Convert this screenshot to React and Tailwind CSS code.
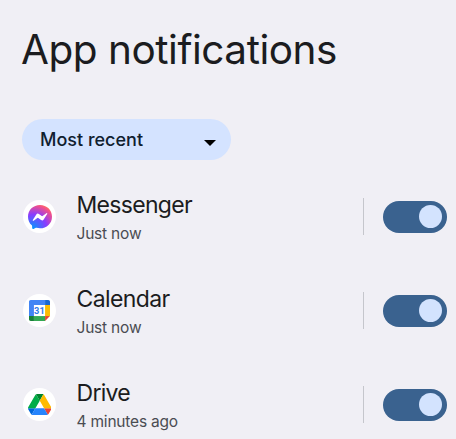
function MessengerIcon() {
  return (
    <svg viewBox="0 0 24 24" className="size-[24px]">
      <defs>
        <radialGradient id="messenger" cx="0.19" cy="0.99" r="1.09">
          <stop offset="0" stopColor="#0099ff" />
          <stop offset="0.55" stopColor="#8a3cff" />
          <stop offset="0.9" stopColor="#f0508c" />
          <stop offset="1" stopColor="#ff7061" />
        </radialGradient>
      </defs>
      <path
        fill="url(#messenger)"
        d="M12 0C5.24 0 0 4.95 0 11.64c0 3.5 1.43 6.52 3.77 8.61.2.17.31.42.32.69l.07 2.13c.02.68.72 1.12 1.34.85l2.38-1.05a1 1 0 0 1 .64-.05c1.1.3 2.26.46 3.48.46 6.76 0 12-4.95 12-11.64S18.76 0 12 0Z"
      />
      <path
        fill="#fff"
        d="m4.79 15.04 3.53-5.59a1.8 1.8 0 0 1 2.6-.48l2.8 2.1c.26.2.61.2.87 0l3.79-2.87c.5-.38 1.16.22.82.76l-3.52 5.59a1.8 1.8 0 0 1-2.6.48l-2.81-2.1a.72.72 0 0 0-.87 0L5.61 15.8c-.5.38-1.16-.22-.82-.76Z"
      />
    </svg>
  );
}

function CalendarIcon() {
  return (
    <svg viewBox="0 0 200 200" className="size-[21px]">
      <path fill="#fff" d="M47 47h106v106H47z" />
      <path fill="#ea4335" d="M153 200l47-47h-47z" />
      <path fill="#fbbc04" d="M200 47h-47v106h47z" />
      <path fill="#34a853" d="M153 153H47v47h106z" />
      <path fill="#188038" d="M0 153v31c0 9 7 16 16 16h31v-47z" />
      <path fill="#1967d2" d="M200 47V16c0-9-7-16-16-16h-31v47z" />
      <path fill="#4285f4" d="M153 0H16C7 0 0 7 0 16v137h47V47h106z" />
      <text
        x="99"
        y="132"
        textAnchor="middle"
        fill="#2f7bea"
        fontSize="88"
        fontWeight="700"
        fontFamily="Roboto, sans-serif"
      >
        31
      </text>
    </svg>
  );
}

function DriveIcon() {
  return (
    <svg viewBox="0 0 87.3 78" className="h-[21px] w-[23.5px]">
      <path fill="#0066da" d="m6.6 66.85 3.85 6.65c.8 1.4 1.95 2.5 3.3 3.3l13.75-23.8H0c0 1.55.4 3.1 1.2 4.5z" />
      <path fill="#00ac47" d="m43.65 25-13.75-23.8c-1.35.8-2.5 1.9-3.3 3.3l-25.4 44a9 9 0 0 0-1.2 4.5h27.5z" />
      <path fill="#ea4335" d="M73.55 76.8c1.35-.8 2.5-1.9 3.3-3.3l1.6-2.75 7.65-13.25c.8-1.4 1.2-2.95 1.2-4.5H59.8l5.85 11.5z" />
      <path fill="#00832d" d="M43.65 25 57.4 1.2C56.05.4 54.5 0 52.9 0H34.4c-1.6 0-3.15.45-4.5 1.2z" />
      <path fill="#2684fc" d="M59.8 53H27.5L13.75 76.8c1.35.8 2.9 1.2 4.5 1.2h50.8c1.6 0 3.15-.45 4.5-1.2z" />
      <path fill="#ffba00" d="m73.4 26.5-12.7-22c-.8-1.4-1.95-2.5-3.3-3.3L43.65 25 59.8 53h27.45c0-1.55-.4-3.1-1.2-4.5z" />
    </svg>
  );
}

const apps = [
  { name: "Messenger", time: "Just now", Icon: MessengerIcon, nameClass: "tracking-[-0.7px]", timeClass: "tracking-[-0.2px]" },
  { name: "Calendar", time: "Just now", Icon: CalendarIcon, nameClass: "tracking-[-0.6px]", timeClass: "tracking-[-0.2px]" },
  { name: "Drive", time: "4 minutes ago", Icon: DriveIcon, nameClass: "tracking-[-0.7px]", timeClass: "tracking-[-0.2px]" },
];

function AppRow({ name, time, Icon, nameClass, timeClass }) {
  return (
    <li className="flex h-[94px] items-start pl-[23px] pr-[9px]">
      <div className="mt-[30px] flex size-[33px] shrink-0 items-center justify-center rounded-full bg-white">
        <Icon />
      </div>
      <div className="ml-[20.5px] mt-[21px] flex-1 whitespace-nowrap">
        <div className={`text-[23px] leading-[28px] text-[#1b1c20] ${nameClass}`}>{name}</div>
        <div className={`mt-[4px] text-[15.5px] leading-[22px] text-[#4a4c52] ${timeClass}`}>{time}</div>
      </div>
      <div className="mt-[28px] h-[37px] w-px bg-[#c5c6cc]" />
      <button className="ml-[19px] mt-[30.5px] flex h-[32.5px] w-[64px] items-center justify-end rounded-full bg-[#3a628f] pr-[5px]">
        <span className="size-[23px] rounded-full bg-[#d3e3fe]" />
      </button>
    </li>
  );
}

export default function App() {
  return (
    <main className="h-[439px] w-[456px] overflow-hidden bg-[#f0eff5] font-[Inter,sans-serif]">
      <h1 className="h-[119px] whitespace-nowrap pl-[21px] pt-[25px] text-[40.5px] leading-[50px] tracking-[-0.47px] text-[#1b1c20]">
        App notifications
      </h1>
      <button className="ml-[22px] flex h-[41px] w-[209px] items-center justify-between rounded-full bg-[#d4e3ff] pl-[18px] pr-[15px]">
        <span className="text-[18px] font-medium leading-[24px] text-[#10202f]">Most recent</span>
        <svg viewBox="0 0 12 6" className="mt-[7px] h-[6px] w-[12px]">
          <path d="M0 0h12L6 6z" fill="#000" />
        </svg>
      </button>
      <ul className="mt-[10px]">
        {apps.map((app) => (
          <AppRow key={app.name} {...app} />
        ))}
      </ul>
    </main>
  );
}
